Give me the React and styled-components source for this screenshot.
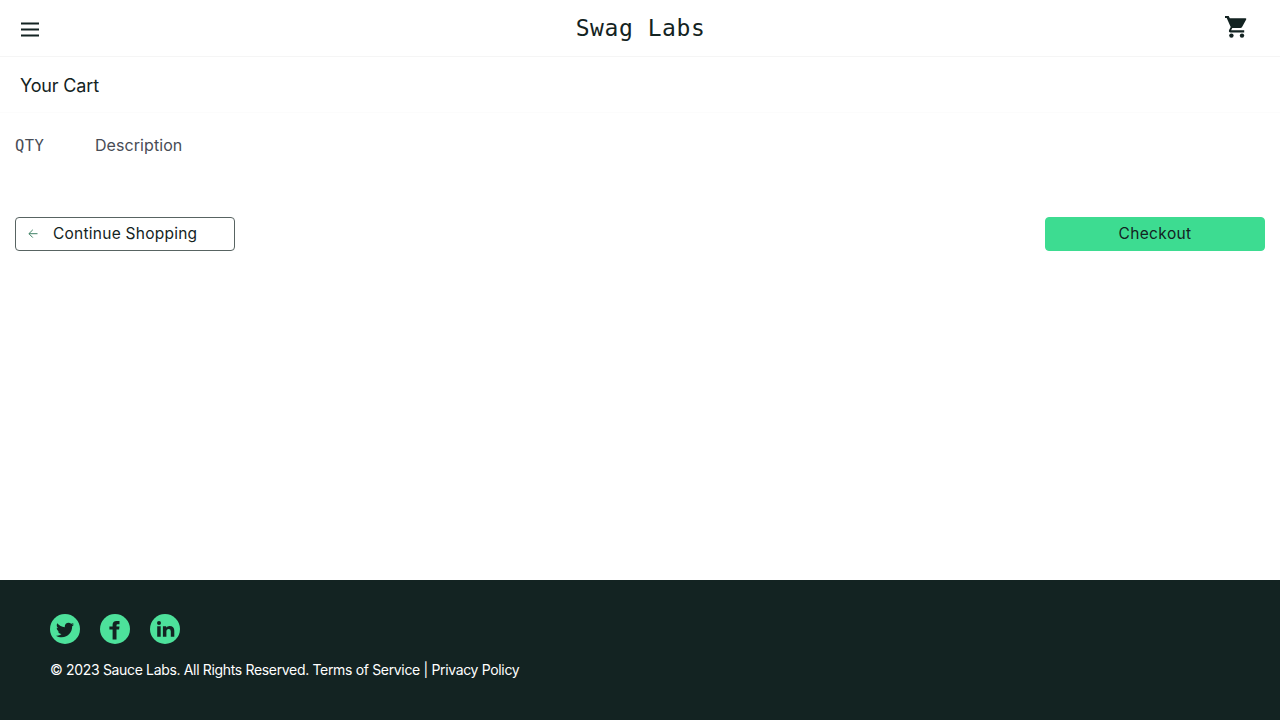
import React from "react";
import styled, { createGlobalStyle } from "styled-components";
import { FaTwitter } from "react-icons/fa";

const GlobalStyle = createGlobalStyle`
  * { box-sizing: border-box; }
  body {
    margin: 0;
    background: #fff;
    color: #132322;
    font-family: "Inter", "Open Sans", sans-serif;
    font-size: 16px;
  }
`;

const Page = styled.div`
  display: flex;
  flex-direction: column;
  height: 720px;
  overflow: hidden;
`;

const Header = styled.header`
  display: grid;
  grid-template-columns: 1fr auto 1fr;
  align-items: center;
  height: 57px;
  padding: 0 31px 0 20px;
  border-bottom: 1px solid #f5f5f5;
`;

const IconButton = styled.button`
  display: flex;
  justify-self: ${(p) => p.$align};
  padding: 0;
  border: 0;
  background: none;
  color: #132322;
`;

const MenuButton = styled(IconButton)`
  margin-top: 3px;
`;

const CartButton = styled(IconButton)`
  margin-top: -3px;
`;

const Logo = styled.div`
  padding-left: 12px;
  font: 23px/32px "DejaVu Sans Mono", monospace;
  letter-spacing: 0.55px;
`;

const TitleBar = styled.div`
  display: flex;
  align-items: center;
  height: 56px;
  padding: 2px 20px 0;
  border-bottom: 1px solid #fcfcfc;
`;

const Title = styled.h1`
  margin: 0;
  font-size: 18px;
  font-weight: 400;
  line-height: 24px;
  letter-spacing: -0.15px;
`;

const Cart = styled.main`
  flex: 1;
  padding: 20px 15px;
`;

const Labels = styled.div`
  display: flex;
  height: 26px;
  color: #484c55;
`;

const Quantity = styled.div`
  width: 80px;
  font: 15.5px/27px "DejaVu Sans Mono", monospace;
  letter-spacing: 0.4px;
`;

const Description = styled.div`
  line-height: 25px;
  letter-spacing: 0.07px;
`;

const Actions = styled.div`
  display: flex;
  justify-content: space-between;
  margin-top: 58px;
`;

const Button = styled.button`
  display: flex;
  align-items: center;
  justify-content: ${(p) => (p.$primary ? "center" : "flex-start")};
  gap: 15px;
  width: ${(p) => (p.$primary ? "220px" : "220.4px")};
  height: 34px;
  padding: 0 12px;
  border: 1px solid ${(p) => (p.$primary ? "#3ddc91" : "#586462")};
  border-radius: 4px;
  background: ${(p) => (p.$primary ? "#3ddc91" : "#fff")};
  color: #132322;
  font: 400 15.5px/20px "Inter", sans-serif;
  letter-spacing: ${(p) => (p.$primary ? "0.38px" : "0.25px")};
`;

const Footer = styled.footer`
  height: 140px;
  padding: 34px 50px;
  background: #132322;
  color: #fff;
`;

const Socials = styled.div`
  display: flex;
  gap: 20px;
`;

const Social = styled.a`
  display: flex;
  align-items: center;
  justify-content: center;
  width: 30px;
  height: 30px;
  padding-top: ${(p) => p.$drop || 0}px;
  border-radius: 50%;
  background: #4de19b;
  color: #132322;
`;

const Copyright = styled.div`
  margin-top: 16px;
  font-size: 14px;
  line-height: 20px;
  white-space: nowrap;
  letter-spacing: -0.335px;
`;

const CartIcon = () => (
  <svg width="26" height="26" viewBox="0 0 26 26" fill="currentColor">
    <path d="M2 2.1H5.7L6.8 4.3H22.3Q23.7 4.3 23.2 5.5L19.2 12.8Q18.6 14 17.3 14H9.3L8.1 16.3H21.2V18.5H7.5Q5.3 18.2 6.1 16.1L7.7 13L3.7 4.1H2Z" />
    <circle cx="8.4" cy="21.6" r="2.2" />
    <circle cx="19" cy="21.6" r="2.2" />
  </svg>
);

const FacebookIcon = () => (
  <svg width="30" height="30" viewBox="0 0 30 30" fill="currentColor">
    <path d="M12.6 25.6V15.5H9.4V12.4H12.6V10.8Q12.6 7 16.5 7H19.5V10.3H17.5Q16.5 10.3 16.5 11.3V12.4H19.5L19.1 15.5H16.5V25.6Z" />
  </svg>
);

const LinkedInIcon = () => (
  <svg width="30" height="30" viewBox="0 0 30 30" fill="currentColor">
    <circle cx="9" cy="8.9" r="2" />
    <path d="M7.2 12.2H10.7V22.7H7.2ZM12.9 12.2H16.2V13.6Q17.2 12 19.5 12Q24.3 12 24.3 16.8V22.7H20.8V17.4Q20.8 15 18.7 15Q16.4 15 16.4 17.6V22.7H12.9Z" />
  </svg>
);

export default function App() {
  return (
    <Page>
      <GlobalStyle />
      <Header>
        <MenuButton $align="start" aria-label="Open menu">
          <svg width="20" height="16" viewBox="0 0 20 16" stroke="currentColor" strokeWidth="2">
            <path d="M1 1.5H19M1 7.4H19M1 13.4H19" />
          </svg>
        </MenuButton>
        <Logo>Swag Labs</Logo>
        <CartButton $align="end" aria-label="Cart">
          <CartIcon />
        </CartButton>
      </Header>
      <TitleBar>
        <Title>Your Cart</Title>
      </TitleBar>
      <Cart>
        <Labels>
          <Quantity>QTY</Quantity>
          <Description>Description</Description>
        </Labels>
        <Actions>
          <Button>
            <svg width="10" height="10" viewBox="0 0 10 10" fill="none" stroke="#3f8065">
              <path d="M9.5 4.7H1M4.8 0.8L0.9 4.7L4.8 8.6" />
            </svg>
            Continue Shopping
          </Button>
          <Button $primary>Checkout</Button>
        </Actions>
      </Cart>
      <Footer>
        <Socials>
          <Social aria-label="Twitter" $drop={2}><FaTwitter size={18} /></Social>
          <Social aria-label="Facebook"><FacebookIcon /></Social>
          <Social aria-label="LinkedIn"><LinkedInIcon /></Social>
        </Socials>
        <Copyright>
          © 2023 Sauce Labs. All Rights Reserved. Terms of Service | Privacy Policy
        </Copyright>
      </Footer>
    </Page>
  );
}
